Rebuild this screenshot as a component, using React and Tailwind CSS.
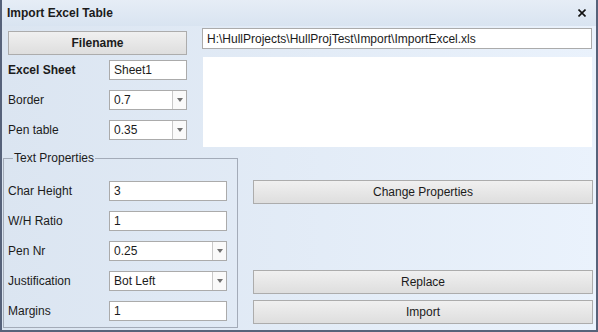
import { useState } from 'react';

const font = { fontFamily: '"Liberation Sans", "DejaVu Sans", sans-serif' };

function Button({ children, bold, className = '' }) {
  return (
    <button
      type="button"
      className={`flex items-center justify-center border border-[#acacac] bg-gradient-to-b from-[#f0f0f0] to-[#dedede] text-[12px] text-[#1b1b1b] ${bold ? 'font-bold' : ''} ${className}`}
    >
      {children}
    </button>
  );
}

function TextBox({ value, className = '' }) {
  return (
    <div className={`flex h-[20px] items-center border border-[#ababab] bg-white pl-[4px] text-[12px] text-[#1b1b1b] ${className}`}>
      {value}
    </div>
  );
}

function Combo({ value, className = '' }) {
  return (
    <div className={`flex h-[20px] border border-[#ababab] bg-white text-[12px] text-[#1b1b1b] ${className}`}>
      <div className="flex flex-1 items-center pl-[4px]">{value}</div>
      <div className="flex w-[14px] items-center justify-center border-l border-[#c9c9c9] bg-[#fafafa]">
        <svg width="6" height="4" viewBox="0 0 6 4">
          <path d="M0 0H6L3 4Z" fill="#707070" />
        </svg>
      </div>
    </div>
  );
}

function Row({ label, children, bold }) {
  return (
    <div className="flex items-center">
      <div className={`w-[101px] text-[12px] text-[#1b1b1b] ${bold ? 'font-bold' : ''}`}>{label}</div>
      {children}
    </div>
  );
}

export default function App() {
  const [path] = useState('H:\\HullProjects\\HullProjTest\\Import\\ImportExcel.xls');

  return (
    <div style={font} className="flex h-[332px] w-[598px] flex-col border-x-2 border-b-2 border-[#56627a] bg-[#dde6f2]">
      {/* title bar */}
      <div className="flex h-[26px] items-center justify-between bg-gradient-to-b from-[#e6edf6] to-[#d9e4f1] pl-[5px] pr-[10px]">
        <span className="text-[12px] font-bold text-[#1b1b1b]">Import Excel Table</span>
        <svg width="8" height="8" viewBox="0 0 8 8">
          <path d="M0.5 0.5L7.5 7.5M7.5 0.5L0.5 7.5" stroke="#111" strokeWidth="1.6" />
        </svg>
      </div>

      <div className="flex flex-1 flex-col bg-gradient-to-r from-[#dbe5f1] to-[#eaf2fc]">
        {/* upper part */}
        <div className="flex">
          <div className="ml-[6px] flex w-[179px] flex-col pt-[5px]">
            <Button bold className="h-[24px]">Filename</Button>
            <div className="mt-[5px] flex flex-col gap-[10px]">
              <Row label="Excel Sheet" bold>
                <TextBox value="Sheet1" className="w-[78px]" />
              </Row>
              <Row label="Border">
                <Combo value="0.7" className="w-[78px]" />
              </Row>
              <Row label="Pen table">
                <Combo value="0.35" className="w-[78px]" />
              </Row>
            </div>
          </div>
          <div className="ml-[15px] flex w-[390px] flex-col pt-[2px]">
            <TextBox value={path} className="h-[21px]" />
            <div className="ml-[1px] mt-[8px] h-[90px] bg-white" />
          </div>
        </div>

        {/* lower part */}
        <div className="mt-[2px] flex flex-1">
          <fieldset className="mb-[2px] ml-[1px] w-[235px] border border-[#a3abb8] pb-0 pl-[4px] pt-[14px]">
            <legend className="ml-[5px] px-[1px] text-[12px] text-[#1b1b1b]">Text Properties</legend>
            <div className="flex flex-col gap-[10px]">
              <Row label="Char Height">
                <TextBox value="3" className="w-[118px]" />
              </Row>
              <Row label="W/H Ratio">
                <TextBox value="1" className="w-[118px]" />
              </Row>
              <Row label="Pen Nr">
                <Combo value="0.25" className="w-[118px]" />
              </Row>
              <Row label="Justification">
                <Combo value="Bot Left" className="w-[118px]" />
              </Row>
              <Row label="Margins">
                <TextBox value="1" className="w-[118px]" />
              </Row>
            </div>
          </fieldset>
          <div className="ml-[15px] flex w-[340px] flex-col pt-[31px]">
            <Button className="h-[24px]">Change Properties</Button>
            <Button className="mt-[66px] h-[24px]">Replace</Button>
            <Button className="mt-[6px] h-[24px]">Import</Button>
          </div>
        </div>
      </div>
    </div>
  );
}
